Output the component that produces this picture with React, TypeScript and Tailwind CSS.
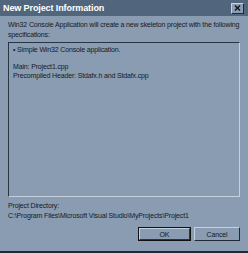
export default function App() {
  return (
    <div
      className="w-[248px] h-[253px] flex flex-col bg-[#8a9cb1] border-b-2 border-b-[#1e2a38] overflow-hidden text-[#14191f]"
      style={{ fontFamily: '"Liberation Sans", Arial, sans-serif' }}
    >
      <div className="h-[16px] bg-[#51667d] flex items-center justify-between pl-[3px] pr-[4px]">
        <span className="text-white font-bold text-[9px] leading-none tracking-[-0.1px]">New Project Information</span>
        <div className="w-[13px] h-[11px] bg-[#8a9cb1] border border-t-[#c9d3de] border-l-[#c9d3de] border-r-[#1e2a38] border-b-[#1e2a38] flex items-center justify-center">
          <svg width="7" height="6" viewBox="0 0 7 6">
            <path d="M1 0.5 L6 5.5 M6 0.5 L1 5.5" stroke="#111" strokeWidth="1.4" />
          </svg>
        </div>
      </div>
      <div className="flex-1 flex flex-col px-[8px] pt-[4px] text-[7px] leading-[10px] tracking-[-0.15px]">
        <p>Win32 Console Application will create a new skeleton project with the following specifications:</p>
        <div className="mt-[2px] h-[155px] border border-t-[#2a3543] border-l-[#2a3543] border-r-[#c6d0dc] border-b-[#c6d0dc] px-[4px] pt-[2px] leading-[9px]">
          <p>• Simple Win32 Console application.</p>
          <p className="mt-[8px]">Main: Project1.cpp</p>
          <p>Precompiled Header: Stdafx.h and Stdafx.cpp</p>
        </div>
        <p className="mt-[4px]">Project Directory:</p>
        <p>C:\Program Files\Microsoft Visual Studio\MyProjects\Project1</p>
        <div className="mt-[6px] flex justify-end gap-[3px]">
          <button className="w-[53px] h-[14px] border border-[#111] bg-[#8a9cb1] text-[7px] leading-none flex items-center justify-center">
            <span className="w-full h-full border border-t-[#c6d0dc] border-l-[#c6d0dc] border-r-[#2a3543] border-b-[#2a3543] flex items-center justify-center">OK</span>
          </button>
          <button className="w-[46px] h-[14px] border border-t-[#c6d0dc] border-l-[#c6d0dc] border-r-[#1e2a38] border-b-[#1e2a38] bg-[#8a9cb1] text-[7px] leading-none">Cancel</button>
        </div>
      </div>
    </div>
  );
}
